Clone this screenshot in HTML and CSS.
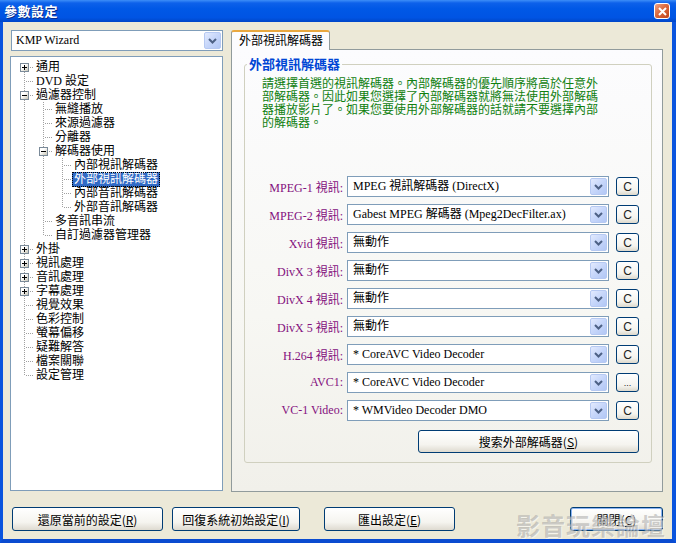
FILE: index.html
```html
<!DOCTYPE html>
<html lang="zh-Hant">
<head>
<meta charset="utf-8">
<title>參數設定</title>
<link rel="stylesheet" href="styles.css">
</head>
<body>
<div class="window">
  <div class="titlebar">
    <span class="title">參數設定</span>
    <span class="close-x"><svg width="9" height="9" viewBox="0 0 9 9"><path d="M1 1 L8 8 M8 1 L1 8" stroke="#fff" stroke-width="2" fill="none"/></svg></span>
  </div>
  <div class="body">
    <div class="main">
      <div class="left">
        <div class="combo combo-left">
          <span class="combo-text">KMP Wizard</span>
          <span class="combo-btn"><svg width="9" height="6" viewBox="0 0 9 6"><path d="M1 1 L4.5 4.5 L8 1" fill="none" stroke="#4D6185" stroke-width="2"/></svg></span>
        </div>
        <div class="tree">
          <div class="tr"><span class="c cf"><span class="pm plus"></span></span><span class="tt">通用</span></div>
          <div class="tr"><span class="c cm"></span><span class="tt">DVD 設定</span></div>
          <div class="tr"><span class="c cm"><span class="pm"></span></span><span class="tt">過濾器控制</span></div>
          <div class="tr"><span class="c g"></span><span class="c cm"></span><span class="tt">無縫播放</span></div>
          <div class="tr"><span class="c g"></span><span class="c cm"></span><span class="tt">來源過濾器</span></div>
          <div class="tr"><span class="c g"></span><span class="c cm"></span><span class="tt">分離器</span></div>
          <div class="tr"><span class="c g"></span><span class="c cm"><span class="pm"></span></span><span class="tt">解碼器使用</span></div>
          <div class="tr"><span class="c g"></span><span class="c g"></span><span class="c cm"></span><span class="tt">內部視訊解碼器</span></div>
          <div class="tr"><span class="c g"></span><span class="c g"></span><span class="c cm"></span><span class="tt sel">外部視訊解碼器</span></div>
          <div class="tr"><span class="c g"></span><span class="c g"></span><span class="c cm"></span><span class="tt">內部音訊解碼器</span></div>
          <div class="tr"><span class="c g"></span><span class="c g"></span><span class="c cl"></span><span class="tt">外部音訊解碼器</span></div>
          <div class="tr"><span class="c g"></span><span class="c cm"></span><span class="tt">多音訊串流</span></div>
          <div class="tr"><span class="c g"></span><span class="c cl"></span><span class="tt">自訂過濾器管理器</span></div>
          <div class="tr"><span class="c cm"><span class="pm plus"></span></span><span class="tt">外掛</span></div>
          <div class="tr"><span class="c cm"><span class="pm plus"></span></span><span class="tt">視訊處理</span></div>
          <div class="tr"><span class="c cm"><span class="pm plus"></span></span><span class="tt">音訊處理</span></div>
          <div class="tr"><span class="c cm"><span class="pm plus"></span></span><span class="tt">字幕處理</span></div>
          <div class="tr"><span class="c cm"></span><span class="tt">視覺效果</span></div>
          <div class="tr"><span class="c cm"></span><span class="tt">色彩控制</span></div>
          <div class="tr"><span class="c cm"></span><span class="tt">螢幕偏移</span></div>
          <div class="tr"><span class="c cm"></span><span class="tt">疑難解答</span></div>
          <div class="tr"><span class="c cm"></span><span class="tt">檔案關聯</span></div>
          <div class="tr"><span class="c cl"></span><span class="tt">設定管理</span></div>
        </div>
      </div>
      <div class="right">
        <div class="tabs"><div class="tab">外部視訊解碼器</div></div>
        <div class="panel">
          <fieldset class="group">
            <legend>外部視訊解碼器</legend>
            <p class="desc">請選擇首選的視訊解碼器。內部解碼器的優先順序將高於任意外<br>部解碼器。因此如果您選擇了內部解碼器就將無法使用外部解碼<br>器播放影片了。如果您要使用外部解碼器的話就請不要選擇內部<br>的解碼器。</p>
            <div class="rows">
              <div class="row"><span class="lbl">MPEG-1 視訊:</span><div class="combo"><span class="combo-text">MPEG 視訊解碼器 (DirectX)</span><span class="combo-btn"><svg width="9" height="6" viewBox="0 0 9 6"><path d="M1 1 L4.5 4.5 L8 1" fill="none" stroke="#4D6185" stroke-width="2"/></svg></span></div><span class="sbtn">C</span></div>
              <div class="row"><span class="lbl">MPEG-2 視訊:</span><div class="combo"><span class="combo-text">Gabest MPEG 解碼器 (Mpeg2DecFilter.ax)</span><span class="combo-btn"><svg width="9" height="6" viewBox="0 0 9 6"><path d="M1 1 L4.5 4.5 L8 1" fill="none" stroke="#4D6185" stroke-width="2"/></svg></span></div><span class="sbtn">C</span></div>
              <div class="row"><span class="lbl">Xvid 視訊:</span><div class="combo"><span class="combo-text">無動作</span><span class="combo-btn"><svg width="9" height="6" viewBox="0 0 9 6"><path d="M1 1 L4.5 4.5 L8 1" fill="none" stroke="#4D6185" stroke-width="2"/></svg></span></div><span class="sbtn">C</span></div>
              <div class="row"><span class="lbl">DivX 3 視訊:</span><div class="combo"><span class="combo-text">無動作</span><span class="combo-btn"><svg width="9" height="6" viewBox="0 0 9 6"><path d="M1 1 L4.5 4.5 L8 1" fill="none" stroke="#4D6185" stroke-width="2"/></svg></span></div><span class="sbtn">C</span></div>
              <div class="row"><span class="lbl">DivX 4 視訊:</span><div class="combo"><span class="combo-text">無動作</span><span class="combo-btn"><svg width="9" height="6" viewBox="0 0 9 6"><path d="M1 1 L4.5 4.5 L8 1" fill="none" stroke="#4D6185" stroke-width="2"/></svg></span></div><span class="sbtn">C</span></div>
              <div class="row"><span class="lbl">DivX 5 視訊:</span><div class="combo"><span class="combo-text">無動作</span><span class="combo-btn"><svg width="9" height="6" viewBox="0 0 9 6"><path d="M1 1 L4.5 4.5 L8 1" fill="none" stroke="#4D6185" stroke-width="2"/></svg></span></div><span class="sbtn">C</span></div>
              <div class="row"><span class="lbl">H.264 視訊:</span><div class="combo"><span class="combo-text">* CoreAVC Video Decoder</span><span class="combo-btn"><svg width="9" height="6" viewBox="0 0 9 6"><path d="M1 1 L4.5 4.5 L8 1" fill="none" stroke="#4D6185" stroke-width="2"/></svg></span></div><span class="sbtn">C</span></div>
              <div class="row"><span class="lbl">AVC1:</span><div class="combo"><span class="combo-text">* CoreAVC Video Decoder</span><span class="combo-btn"><svg width="9" height="6" viewBox="0 0 9 6"><path d="M1 1 L4.5 4.5 L8 1" fill="none" stroke="#4D6185" stroke-width="2"/></svg></span></div><span class="sbtn dots">...</span></div>
              <div class="row"><span class="lbl">VC-1 Video:</span><div class="combo"><span class="combo-text">* WMVideo Decoder DMO</span><span class="combo-btn"><svg width="9" height="6" viewBox="0 0 9 6"><path d="M1 1 L4.5 4.5 L8 1" fill="none" stroke="#4D6185" stroke-width="2"/></svg></span></div><span class="sbtn">C</span></div>
            </div>
            <div class="search-row"><span class="btn search">搜索外部解碼器(<u>S</u>)</span></div>
          </fieldset>
        </div>
      </div>
    </div>
    <div class="buttons">
      <span class="btn b1">還原當前的設定(<u>R</u>)</span>
      <span class="btn b2">回復系統初始設定(<u>I</u>)</span>
      <span class="btn b3">匯出設定(<u>E</u>)</span>
      <span class="btn b4 default">關閉(<u>C</u>)</span>
    </div>
    <div class="watermark">影音玩樂論壇</div>
  </div>
</div>
</body>
</html>
```
FILE: styles.css
```css
* { box-sizing: border-box; }
html, body { margin: 0; padding: 0; background: #ECE9D8; }
body {
  font: 12px "Liberation Serif", "Noto Sans CJK TC", serif;
  color: #000;
}
.window {
  width: 676px;
  height: 543px;
  display: flex;
  flex-direction: column;
  overflow: hidden;
}
.titlebar {
  height: 22px;
  flex: none;
  display: flex;
  align-items: center;
  justify-content: space-between;
  padding: 0 6px 0 4px;
  background: linear-gradient(to bottom, #3D8EF8 0, #0D61EA 3px, #0058E6 40%, #0054E3 80%, #0046C8 100%);
}
.title {
  color: #fff;
  font: bold 13px "Noto Sans CJK TC", sans-serif;
  line-height: 16px;
  letter-spacing: 0.5px;
  text-shadow: 1px 1px 0 #0A2A8A;
}
.close-x {
  width: 16px;
  height: 16px;
  border: 1px solid #fff;
  border-radius: 3px;
  background: linear-gradient(135deg, #F0A386 0, #DB6A3E 45%, #C0431A 100%);
  display: flex;
  align-items: center;
  justify-content: center;
}
.body {
  flex: 1;
  position: relative;
  border-left: 3px solid #0A54DE;
  border-right: 4px solid #0A54DE;
  border-bottom: 4px solid #0A4BD0;
  padding: 8px 9px 8px 7px;
  display: flex;
  flex-direction: column;
}
.main {
  height: 462px;
  display: flex;
  gap: 8px;
}
.left {
  width: 213px;
  display: flex;
  flex-direction: column;
  padding-bottom: 1px;
}
.combo {
  height: 21px;
  border: 1px solid #7F9DB9;
  background: #fff;
  display: flex;
  align-items: stretch;
  padding: 1px;
}
.combo-left {
  margin-left: 1px;
  margin-bottom: 5px;
}
.combo-text {
  flex: 1;
  padding-left: 3px;
  line-height: 17px;
  white-space: nowrap;
  overflow: hidden;
}
.combo-btn {
  width: 17px;
  flex: none;
  border: 1px solid #B6C9F2;
  border-radius: 2px;
  background: linear-gradient(135deg, #E2EAFE 0, #C6D6FA 50%, #B2C7F5 100%);
  display: flex;
  align-items: center;
  justify-content: center;
}
.tree {
  flex: 1;
  border: 1px solid #7F9DB9;
  background: #fff;
  padding: 3px 0 0 4px;
}
.tr {
  height: 14px;
  display: flex;
  align-items: flex-start;
}
.c {
  width: 19px;
  height: 14px;
  flex: none;
  display: flex;
  align-items: flex-start;
  padding: 3px 0 0 5px;
}
.g {
  background: repeating-linear-gradient(to bottom, #A0A0A0 0 1px, transparent 1px 2px) 9px 0 / 1px 14px no-repeat;
}
.cm {
  background:
    repeating-linear-gradient(to bottom, #A0A0A0 0 1px, transparent 1px 2px) 9px 0 / 1px 14px no-repeat,
    repeating-linear-gradient(to right, #A0A0A0 0 1px, transparent 1px 2px) 11px 7px / 8px 1px no-repeat;
}
.cl {
  background:
    repeating-linear-gradient(to bottom, #A0A0A0 0 1px, transparent 1px 2px) 9px 0 / 1px 8px no-repeat,
    repeating-linear-gradient(to right, #A0A0A0 0 1px, transparent 1px 2px) 11px 7px / 8px 1px no-repeat;
}
.cf {
  background:
    repeating-linear-gradient(to bottom, #A0A0A0 0 1px, transparent 1px 2px) 9px 8px / 1px 6px no-repeat,
    repeating-linear-gradient(to right, #A0A0A0 0 1px, transparent 1px 2px) 11px 7px / 8px 1px no-repeat;
}
.pm {
  width: 9px;
  height: 9px;
  border: 1px solid #7A8A99;
  background:
    linear-gradient(#000, #000) center / 5px 1px no-repeat,
    linear-gradient(135deg, #FFFFFF 35%, #C8C5B5 100%);
}
.pm.plus {
  background:
    linear-gradient(#000, #000) center / 5px 1px no-repeat,
    linear-gradient(#000, #000) center / 1px 5px no-repeat,
    linear-gradient(135deg, #FFFFFF 35%, #C8C5B5 100%);
}
.tt {
  height: 14px;
  line-height: 14px;
  padding: 0 2px;
  white-space: nowrap;
}
.tt.sel {
  background: #316AC5;
  color: #fff;
  outline: 1px dotted #000;
  outline-offset: -1px;
  height: 15px;
}
.right {
  flex: 1;
  display: flex;
  flex-direction: column;
}
.tabs {
  display: flex;
  height: 20px;
  margin-bottom: -1px;
  position: relative;
  z-index: 1;
}
.tab {
  width: 99px;
  height: 20px;
  border: 1px solid #919B9C;
  border-top: 2px solid #E9A83F;
  border-bottom: none;
  border-radius: 3px 3px 0 0;
  background: #FCFCFE;
  padding-left: 7px;
  line-height: 18px;
  white-space: nowrap;
}
.panel {
  flex: 1;
  border: 1px solid #919B9C;
  background: linear-gradient(to bottom, #FCFCFE 0, #F7F7F3 60%, #F1F0EA 100%);
  padding: 7px 10px 0 12px;
}
.group {
  margin: 0;
  min-width: 0;
  border: 1px solid #D0D0BF;
  border-radius: 3px;
  padding: 0 12px 9px 5px;
}
.group legend {
  margin-left: -3px;
  padding: 0 2px;
  font: bold 13px "Noto Sans CJK TC", sans-serif;
  line-height: 14px;
  color: #0046D5;
}
.desc {
  margin: 5px 0 48px 12px;
  color: #108010;
  font: 12px "Noto Sans CJK TC", sans-serif;
  line-height: 13px;
  white-space: nowrap;
}
.rows {
  display: flex;
  flex-direction: column;
  gap: 7px;
}
.row {
  display: flex;
  align-items: center;
  height: 21px;
}
.lbl {
  width: 93px;
  margin-right: 4px;
  text-align: right;
  color: #84107E;
  white-space: nowrap;
}
.row .combo {
  width: 262px;
  margin-right: 7px;
}
.row .combo-text { padding-left: 4px; }
.sbtn {
  width: 23px;
  height: 19px;
  border: 1px solid #003C74;
  border-radius: 3px;
  background: linear-gradient(to bottom, #FFFFFF 0, #F4F3EE 70%, #DCD8CC 100%);
  display: flex;
  align-items: center;
  justify-content: center;
  font: 12px "Liberation Sans", sans-serif;
  color: #222;
}
.sbtn.dots {
  font-size: 9px;
  align-items: flex-end;
  padding-bottom: 3px;
}
.search-row {
  display: flex;
  justify-content: flex-end;
  margin-top: 9px;
}
.btn {
  height: 23px;
  border: 1px solid #003C74;
  border-radius: 3px;
  background: linear-gradient(to bottom, #FFFFFF 0, #F5F4EF 65%, #DEDAD0 100%);
  display: flex;
  align-items: center;
  justify-content: center;
  font: 12px "Noto Sans CJK TC", sans-serif;
  white-space: nowrap;
}
.search { width: 221px; }
.buttons {
  display: flex;
  margin-top: 15px;
  padding-left: 2px;
  height: 24px;
}
.buttons .btn { height: 24px; }
.b1 { width: 151px; }
.b2 { width: 128px; margin-left: 9px; }
.b3 { width: 131px; margin-left: 24px; }
.b4 { width: 93px; margin-left: auto; }
.btn.default {
  box-shadow: inset 0 0 0 1px #8CB4F2;
}
.watermark {
  position: absolute;
  right: 6px;
  bottom: 0px;
  font: bold 24px "Noto Sans CJK TC", sans-serif;
  line-height: 28px;
  color: rgba(150, 150, 150, 0.45);
  letter-spacing: 1px;
  text-shadow: 1px 1px 0 rgba(255, 255, 255, 0.5);
  pointer-events: none;
}
```
